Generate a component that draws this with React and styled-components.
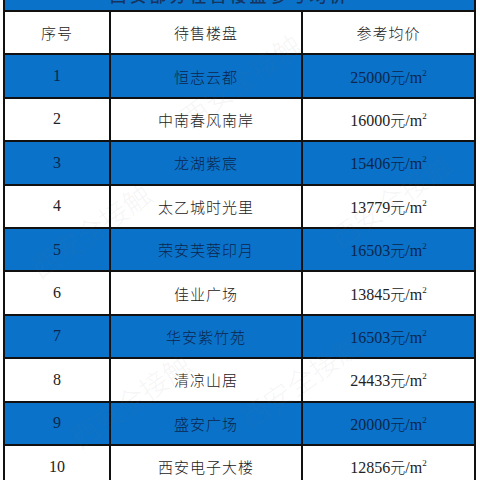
import React from 'react';
import styled, { createGlobalStyle } from 'styled-components';

const GlobalStyle = createGlobalStyle`
  html, body {
    margin: 0;
    padding: 0;
    background: #ffffff;
  }
  body {
    font-family: "Liberation Serif", "Noto Sans CJK SC", serif;
  }
`;

const Page = styled.div`
  position: relative;
  width: 480px;
  height: 480px;
  overflow: hidden;
  background: #ffffff;
  padding-left: 3px;
  box-sizing: border-box;
`;

const Table = styled.table`
  border-collapse: collapse;
  table-layout: fixed;
  width: 473px;
  border-left: 2px solid #111;
  border-right: 2px solid #111;
`;

const TitleCell = styled.td`
  height: 10px;
  padding: 0;
  background: #0a72c8;
  border-bottom: 2px solid #111;
  overflow: hidden;
  text-align: center;
  vertical-align: bottom;
`;

const TitleClip = styled.div`
  height: 10px;
  overflow: hidden;
`;

const TitleText = styled.div`
  margin-top: -15px;
  margin-left: -20px;
  font-family: "Noto Sans CJK SC", sans-serif;
  font-size: 17px;
  font-weight: 500;
  line-height: 20px;
  color: #16345f;
  letter-spacing: 3px;
`;

const Row = styled.tr`
  height: 43.4px;
  background: ${p => (p.$blue ? '#0a72c8' : '#ffffff')};
  color: ${p => (p.$blue ? '#0c264d' : '#222222')};
`;

const Cell = styled.td`
  padding: 0;
  border: 2px solid #111;
  text-align: center;
  vertical-align: middle;
  font-size: ${p => (p.$cjk ? '15px' : '16px')};
  font-family: ${p =>
    p.$cjk
      ? '"Noto Sans CJK SC", sans-serif'
      : '"Liberation Serif", "Noto Sans CJK SC", serif'};
  font-weight: ${p => (p.$cjk ? 300 : 400)};
  letter-spacing: ${p => (p.$cjk ? '1px' : '0')};
  &:first-child { border-left: none; }
  &:last-child { border-right: none; }
`;

const Unit = styled.span`
  font-family: "Noto Sans CJK SC", sans-serif;
  font-weight: 300;
  font-size: 15px;
`;

const Square = styled.span`
  font-family: "Liberation Serif", serif;
  font-size: 16px;
`;

const Sup = styled.sup`
  font-size: 9px;
  vertical-align: 7px;
`;

const Watermark = styled.div`
  position: absolute;
  left: ${p => p.$x}px;
  top: ${p => p.$y}px;
  transform: rotate(-35deg);
  font-family: "Noto Sans CJK SC", sans-serif;
  font-size: 28px;
  font-weight: 300;
  color: rgba(120, 120, 120, 0.08);
  white-space: nowrap;
  pointer-events: none;
`;

const rows = [
  ['1', '恒志云都', '25000'],
  ['2', '中南春风南岸', '16000'],
  ['3', '龙湖紫宸', '15406'],
  ['4', '太乙城时光里', '13779'],
  ['5', '荣安芙蓉印月', '16503'],
  ['6', '佳业广场', '13845'],
  ['7', '华安紫竹苑', '16503'],
  ['8', '清凉山居', '24433'],
  ['9', '盛安广场', '20000'],
  ['10', '西安电子大楼', '12856'],
];

const marks = [
  [20, 210],
  [170, 60],
  [320, 180],
  [60, 380],
  [230, 360],
];

const App = () => (
  <>
    <GlobalStyle />
    <Page>
      <Table>
        <colgroup>
          <col style={{ width: 106 }} />
          <col style={{ width: 192 }} />
          <col style={{ width: 173 }} />
        </colgroup>
        <tbody>
          <tr>
            <TitleCell colSpan={3}>
              <TitleClip>
                <TitleText>西安部分在售楼盘参考均价</TitleText>
              </TitleClip>
            </TitleCell>
          </tr>
          <Row>
            <Cell $cjk>序号</Cell>
            <Cell $cjk>待售楼盘</Cell>
            <Cell $cjk>参考均价</Cell>
          </Row>
          {rows.map(([n, name, price], i) => (
            <Row key={n} $blue={i % 2 === 0}>
              <Cell>{n}</Cell>
              <Cell $cjk>{name}</Cell>
              <Cell>
                {price}
                <Unit>元</Unit>/<Square>m<Sup>2</Sup></Square>
              </Cell>
            </Row>
          ))}
        </tbody>
      </Table>
      {marks.map(([x, y], i) => (
        <Watermark key={i} $x={x} $y={y}>西安全接触</Watermark>
      ))}
    </Page>
  </>
);

export default App;
